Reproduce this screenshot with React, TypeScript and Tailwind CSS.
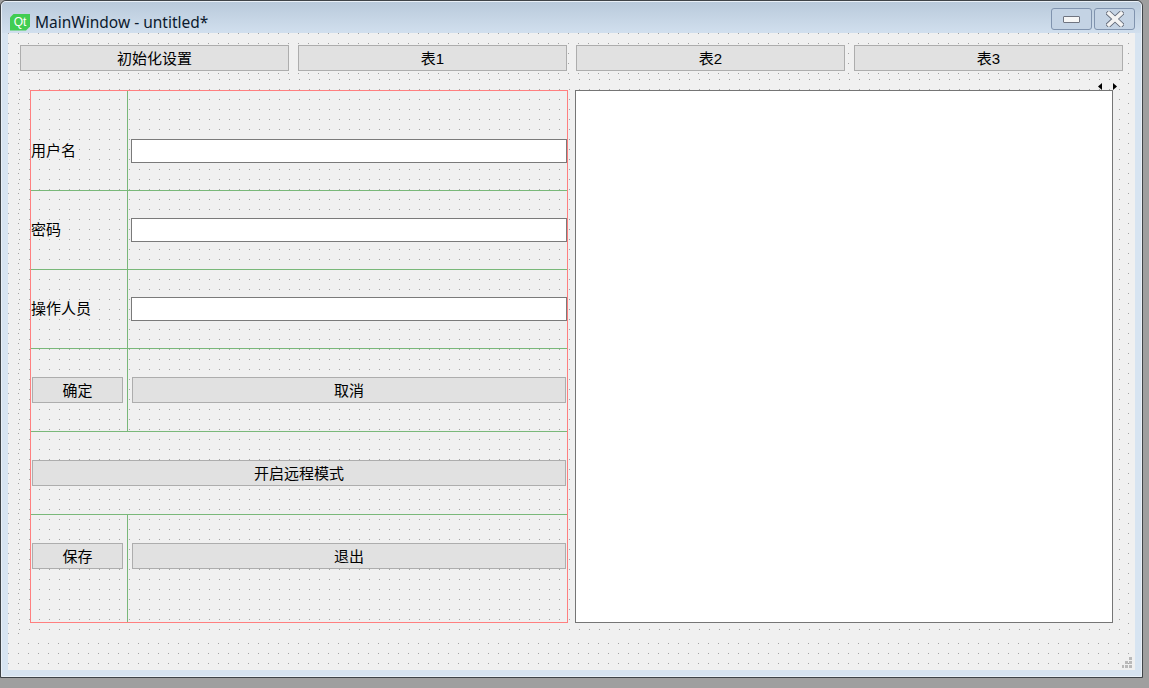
const cjk = "font-['Liberation_Sans','Noto_Sans_CJK_SC',sans-serif]";

function Btn({ label, className }: { label: string; className: string }) {
  return (
    <button className={`h-[26px] shrink-0 border border-[#adadad] bg-[#e1e1e1] text-[15px] leading-none text-black ${className}`}>
      {label}
    </button>
  );
}

function Field() {
  return <div className="h-6 w-[436px] border border-[#7a7a7a] bg-white" />;
}

function Label({ text }: { text: string }) {
  return <span className="text-[15px] leading-6 text-black">{text}</span>;
}

function WindowButtons() {
  return (
    <div className="flex gap-[2px]">
      <div className="flex h-[22px] w-[41px] items-center justify-center rounded-[3px] border border-[#8093ae] bg-[#c4d3e4]">
        <div className="h-[7px] w-[17px] rounded-[1px] border border-[#6f7480] bg-[#f6f6f6]" />
      </div>
      <div className="flex h-[22px] w-[41px] items-center justify-center rounded-[3px] border border-[#8093ae] bg-[#c4d3e4]">
        <svg width="18" height="16" viewBox="0 0 18 16">
          <path d="M3 2.5 L15 13.5 M15 2.5 L3 13.5" stroke="#5f6675" strokeWidth="5.5" strokeLinecap="square" />
          <path d="M3 2.5 L15 13.5 M15 2.5 L3 13.5" stroke="#f2f2f2" strokeWidth="3.8" strokeLinecap="square" />
        </svg>
      </div>
    </div>
  );
}

function SizeGrip() {
  return (
    <svg className="absolute bottom-[2px] right-[3px]" width="10" height="11" viewBox="0 0 10 11" fill="#b9b9b9">
      <rect x="7" y="0" width="3" height="3" />
      <rect x="3" y="4" width="3" height="3" />
      <rect x="7" y="4" width="3" height="3" />
      <rect x="0" y="8" width="2" height="3" />
      <rect x="3" y="8" width="3" height="3" />
      <rect x="7" y="8" width="3" height="3" />
    </svg>
  );
}

export default function App() {
  const line = "border-[#79b879]";

  return (
    <div className={`h-[688px] w-[1149px] overflow-hidden bg-[#9f9f9f] ${cjk}`}>
      <div className="h-[678px] w-[1143px] rounded-t-[6px] border border-[#3f4448]">
        <div className="flex h-full flex-col rounded-t-[5px] border border-[#e9f0f7] bg-[#d7e4f1]">
          {/* title bar */}
          <div className="flex h-[31px] shrink-0 items-start justify-between rounded-t-[4px] bg-gradient-to-b from-[#b9cadb] to-[#d1dfee] pl-2 pr-[6px] pt-[6px]">
            <div className="flex items-center pt-[5px]">
              <div className="flex h-[17px] w-5 items-center justify-center bg-[#41cd52] pb-px text-[12px] leading-none text-white [clip-path:polygon(4px_0,100%_0,100%_calc(100%-4px),calc(100%-4px)_100%,0_100%,0_4px)]">
                Qt
              </div>
              <span className="ml-[5px] font-['Noto_Sans',sans-serif] text-[15.5px] leading-[18px] text-[#0c1a2e]">MainWindow - untitled*</span>
            </div>
            <WindowButtons />
          </div>

          {/* form */}
          <div className="flex-1 px-[6px] pb-[6px]">
            <div className="relative flex h-full flex-col bg-[#f0f0f0] bg-[conic-gradient(at_1px_1px,transparent_75%,#a3a3a3_0)] bg-[length:10px_10px]">
              <div className="flex gap-[9px] px-3 pt-3">
                <Btn label="初始化设置" className="w-[269px]" />
                <Btn label="表1" className="w-[269px]" />
                <Btn label="表2" className="w-[269px]" />
                <Btn label="表3" className="w-[269px]" />
              </div>

              {/* central widget */}
              <div className="ml-[11px] mt-1 flex h-[560px] w-[1105px] gap-[7px] bg-[#f0f0f0] bg-[conic-gradient(at_1px_1px,transparent_75%,#a3a3a3_0)] bg-[length:10px_10px] bg-[position:0_4px] pl-[11px] pt-[15px]">
                {/* left grid layout */}
                <div className="flex h-[533px] w-[538px] flex-col border border-[#ff7f7f]">
                  <div className={`flex h-[100px] border-b ${line}`}>
                    <div className={`w-[97px] border-r pb-[27px] pt-12 ${line}`}>
                      <Label text="用户名" />
                    </div>
                    <div className="pb-[27px] pl-[3px] pt-12">
                      <Field />
                    </div>
                  </div>
                  <div className={`flex h-[79px] border-b ${line}`}>
                    <div className={`w-[97px] border-r py-[27px] ${line}`}>
                      <Label text="密码" />
                    </div>
                    <div className="py-[27px] pl-[3px]">
                      <Field />
                    </div>
                  </div>
                  <div className={`flex h-[79px] border-b ${line}`}>
                    <div className={`w-[97px] border-r py-[27px] ${line}`}>
                      <Label text="操作人员" />
                    </div>
                    <div className="py-[27px] pl-[3px]">
                      <Field />
                    </div>
                  </div>
                  <div className={`flex h-[83px] border-b ${line}`}>
                    <div className={`w-[97px] border-r pl-px pt-7 ${line}`}>
                      <Btn label="确定" className="block w-[91px]" />
                    </div>
                    <div className="pl-1 pt-7">
                      <Btn label="取消" className="block w-[434px]" />
                    </div>
                  </div>
                  <div className={`h-[83px] border-b pl-px pt-7 ${line}`}>
                    <Btn label="开启远程模式" className="block w-[534px]" />
                  </div>
                  <div className="flex flex-1">
                    <div className={`w-[97px] border-r pl-px pt-7 ${line}`}>
                      <Btn label="保存" className="block w-[91px]" />
                    </div>
                    <div className="pl-1 pt-7">
                      <Btn label="退出" className="block w-[434px]" />
                    </div>
                  </div>
                </div>

                {/* right panel */}
                <div className="relative h-[533px] w-[538px] border border-[#757575] bg-white">
                  <svg className="absolute -top-[8px] right-[-5px]" width="19" height="7" viewBox="0 0 19 7" fill="#000000">
                    <polygon points="0,3.5 4,0 4,7" />
                    <polygon points="15,0 19,3.5 15,7" />
                  </svg>
                </div>
              </div>

              <SizeGrip />
            </div>
          </div>
        </div>
      </div>
    </div>
  );
}
